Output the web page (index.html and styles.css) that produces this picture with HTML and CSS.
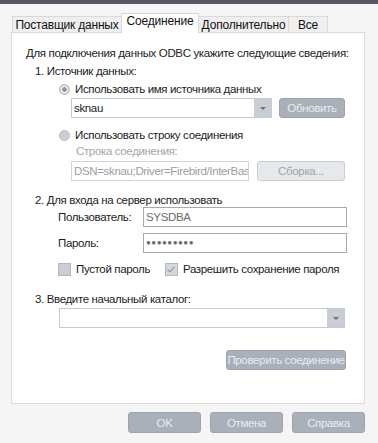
FILE: index.html
```html
<!DOCTYPE html>
<html lang="ru">
<head>
  <meta charset="UTF-8">
  <title>Свойства канала передачи данных</title>
  <link rel="stylesheet" href="styles.css">
</head>
<body>
  <div class="topbar"></div>
  <div class="dialog">
    <!-- вкладки -->
    <div class="tabs">
      <span class="tab provider-tab">Поставщик данных</span>
      <span class="tab active">Соединение</span>
      <span class="tab extra-tab">Дополнительно</span>
      <span class="tab all-tab">Все</span>
    </div>
    <div class="panel">
      <div class="intro">Для подключения данных ODBC укажите следующие сведения:</div>

      <div class="section-title">1. Источник данных:</div>
      <div class="option first">
        <span class="radio checked"></span>
        <span>Использовать имя источника данных</span>
      </div>
      <div class="field-row dsn-row">
        <div class="combo dsn-combo">
          <span class="combo-text">sknau</span>
          <span class="combo-btn"><i class="arrow"></i></span>
        </div>
        <button class="btn refresh-btn">Обновить</button>
      </div>
      <div class="option second">
        <span class="radio"></span>
        <span>Использовать строку соединения</span>
      </div>
      <div class="muted-label">Строка соединения:</div>
      <div class="field-row conn-row">
        <div class="input disabled conn-input">DSN=sknau;Driver=Firebird/InterBase(r) driver</div>
        <button class="btn disabled build-btn">Сборка...</button>
      </div>

      <div class="section-title login-title">2. Для входа на сервер использовать</div>
      <div class="login-row">
        <span class="login-label">Пользователь:</span>
        <div class="input login-input user-text">SYSDBA</div>
      </div>
      <div class="login-row pass-row">
        <span class="login-label">Пароль:</span>
        <div class="input login-input pass-text">●●●●●●●●●</div>
      </div>
      <div class="check-row">
        <span class="check"></span>
        <span class="check-text">Пустой пароль</span>
        <span class="check checked"></span>
        <span>Разрешить сохранение пароля</span>
      </div>

      <div class="section-title catalog-title">3. Введите начальный каталог:</div>
      <div class="combo catalog-combo">
        <span class="combo-text"></span>
        <span class="combo-btn"><i class="arrow"></i></span>
      </div>

      <div class="test-row">
        <button class="btn test-btn">Проверить соединение</button>
      </div>
    </div>

    <div class="actions">
      <button class="btn action-btn">OK</button>
      <button class="btn action-btn">Отмена</button>
      <button class="btn action-btn">Справка</button>
    </div>
  </div>
</body>
</html>
```

FILE: styles.css
```css
body {
  margin: 0;
  background: #f5f5f5;
  font-family: 'Liberation Sans', Arial, sans-serif;
  font-size: 11.5px;
  letter-spacing: -0.35px;
  color: #1c1c1c;
  white-space: nowrap;
}
.topbar {
  height: 4px;
  background: #54585e;
}
.dialog {
  padding: 0 13px 0 11px;
}

/* вкладки */
.tabs {
  display: flex;
  align-items: flex-end;
  height: 19px;
  margin-top: 9px;
  padding-left: 1px;
}
.tab {
  height: 15px;
  line-height: 16px;
  text-align: center;
  background: #efefef;
  border: 1px solid #d9d9d9;
  border-bottom: none;
  margin-right: -1px;
  color: #111;
  font-size: 12px;
  letter-spacing: -0.2px;
}
.provider-tab { width: 108px; }
.extra-tab { width: 89px; }
.all-tab { width: 38px; }
.tab.active {
  position: relative;
  z-index: 1;
  width: 76px;
  height: 19px;
  line-height: 15px;
  margin-bottom: -1px;
  background: #fff;
}

.panel {
  background: #fff;
  border: 1px solid #d9d9d9;
  padding: 12px 0 33px 0;
}
.intro {
  line-height: 16px;
  padding-left: 14px;
}
.section-title {
  line-height: 16px;
  margin-top: 2px;
  padding-left: 23px;
}
.option {
  display: flex;
  align-items: center;
  gap: 5px;
  height: 16px;
  margin-left: 47px;
}
.option.first { margin-top: 2px; }
.option.second { margin-top: 9px; }
.radio {
  width: 9px;
  height: 9px;
  border-radius: 50%;
  background: #c9ced6;
  border: 1px solid #b7bcc4;
}
.radio.checked {
  background: radial-gradient(circle, #8e949c 0 2px, #eef0f3 2.5px 3.5px, #c9ced6 4px);
}

.field-row {
  display: flex;
  gap: 7px;
  margin-left: 59px;
}
.dsn-row { margin-top: 1px; }
.combo {
  display: flex;
  height: 18px;
  border: 1px solid #c5cad2;
  background: #fff;
}
.dsn-combo { width: 199px; }
.combo-text {
  flex: 1;
  line-height: 18px;
  padding-left: 2px;
}
.combo-btn {
  width: 17px;
  background: #c9ced6;
  display: flex;
  align-items: center;
  justify-content: center;
}
.arrow {
  width: 0;
  height: 0;
  border-left: 3px solid transparent;
  border-right: 3px solid transparent;
  border-top: 3px solid #6e737a;
}

.btn {
  height: 20px;
  padding: 0;
  border: 1px solid #9ea5af;
  border-radius: 3px;
  background: #a9b0ba;
  color: #e9ecf0;
  font-family: inherit;
  font-size: 11.5px;
  letter-spacing: -0.35px;
  white-space: nowrap;
}
.btn.disabled {
  background: #e6e8eb;
  border-color: #c9ccd1;
  color: #9ea4ac;
}
.refresh-btn { width: 66px; }

.muted-label {
  color: #a2a6ac;
  line-height: 16px;
  margin-left: 64px;
}
.conn-row {
  gap: 8px;
  margin-top: 2px;
}
.input {
  height: 18px;
  line-height: 18px;
  border: 1px solid #a9a9a9;
  background: #fff;
  padding: 0 2px;
  overflow: hidden;
}
.input.disabled {
  border-color: #d2d4d7;
  color: #9a9ea4;
}
.conn-input { width: 172px; }
.build-btn { width: 88px; }

.login-title {
  margin-top: 12px;
  line-height: 14px;
}
.login-row {
  display: flex;
  align-items: center;
  margin-left: 46px;
}
.pass-row { margin-top: 6px; }
.login-label {
  width: 85px;
}
.login-input { width: 198px; }
.user-text { color: #6c6c6c; }
.pass-text {
  color: #6c6c6c;
  font-size: 8px;
  letter-spacing: 0.5px;
}

.check-row {
  display: flex;
  align-items: center;
  height: 16px;
  margin: 8px 0 0 46px;
}
.check {
  width: 11px;
  height: 11px;
  background: #c9ced6;
  border: 1px solid #b3b8c0;
  margin-right: 5px;
  position: relative;
}
.check.checked {
  background: #d3d7de;
}
.check.checked::after {
  content: "";
  position: absolute;
  left: 3px;
  top: 1px;
  width: 3px;
  height: 6px;
  border-right: 1.5px solid #8a9098;
  border-bottom: 1.5px solid #8a9098;
  transform: rotate(40deg);
}
.check-text { width: 89px; }

.catalog-title { margin-top: 14px; }
.catalog-combo {
  width: 284px;
  margin: 1px 0 0 47px;
}
.test-row {
  display: flex;
  justify-content: flex-end;
  margin: 22px 18px 0 0;
}
.test-btn { width: 120px; }

.actions {
  display: flex;
  justify-content: flex-end;
  gap: 9px;
  margin-top: 8px;
}
.action-btn {
  width: 73px;
  height: 21px;
}
```
